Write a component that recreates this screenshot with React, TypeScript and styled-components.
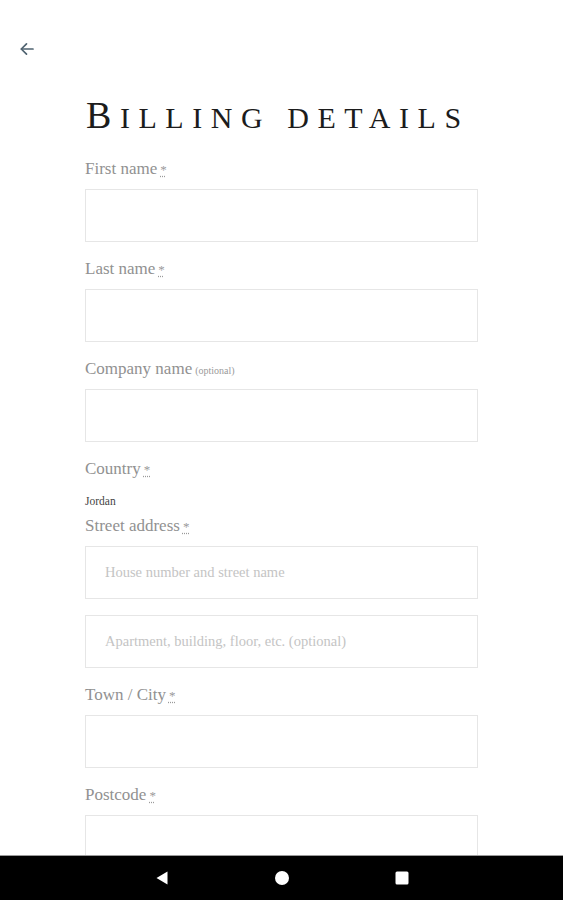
import { createGlobalStyle } from 'styled-components';
import styled from 'styled-components';

const Global = createGlobalStyle`
  html, body {
    margin: 0;
    padding: 0;
    background: #ffffff;
    overflow: hidden;
    height: 100%;
  }
  body {
    font-family: "Liberation Serif", "DejaVu Serif", serif;
  }
`;

const Page = styled.div`
  position: relative;
  width: 563px;
  height: 900px;
  overflow: hidden;
  background: #fff;
`;

const TopBar = styled.div`
  height: 96px;
  padding: 40px 0 0 18px;
  box-sizing: border-box;
`;

const BackBtn = styled.button`
  border: none;
  background: none;
  padding: 0;
  width: 18px;
  height: 18px;
  display: flex;
  align-items: center;
  justify-content: center;
  color: #4f6370;
`;

const Form = styled.form`
  width: 393px;
  margin-left: 85px;
`;

const Title = styled.h1`
  margin: 0 0 23px 1px;
  font-weight: 400;
  color: #1c1c1c;
  font-size: 30px;
  line-height: 38px;
  letter-spacing: 0.285em;
  white-space: nowrap;
  height: 38px;
`;

const Initial = styled.span`
  font-size: 38px;
`;

const Rest = styled.span`
  text-transform: uppercase;
`;

const Field = styled.div<{ $tight?: boolean }>`
  margin-bottom: ${(p) => (p.$tight ? '5px' : '15px')};
`;

const Label = styled.label`
  display: block;
  height: 24px;
  font-size: 17px;
  line-height: 24px;
  color: #919191;
  margin-bottom: 8px;
  white-space: nowrap;
`;

const Req = styled.abbr`
  text-decoration: underline dotted;
  text-underline-offset: 2px;
  font-size: 13px;
  line-height: 1;
  color: #9a9a9a;
  margin-left: 3px;
`;

const Optional = styled.span`
  font-size: 10px;
  line-height: 1;
  color: #9a9a9a;
  margin-left: 3px;
`;

const CountryValue = styled.div`
  margin-top: -8px;
  font-size: 11.5px;
  line-height: 16px;
  padding-top: 12px;
  color: #444;
`;

const Input = styled.input<{ $gap?: boolean }>`
  display: block;
  width: 100%;
  height: 53px;
  box-sizing: border-box;
  border: 1px solid #e6e6e6;
  background: #fff;
  padding: 0 19px;
  font-family: "Liberation Serif", "DejaVu Serif", serif;
  font-size: 14.5px;
  color: #333;
  outline: none;
  margin-top: ${(p) => (p.$gap ? '16px' : '0')};
  &::placeholder {
    color: #c4c4c4;
  }
`;

const NavBar = styled.div`
  position: absolute;
  left: 0;
  right: 0;
  bottom: 0;
  height: 44px;
  background: #000;
  border-top: 1px solid #9a9a9a;
  display: flex;
  align-items: center;
  justify-content: center;
`;

const NavSlot = styled.div`
  width: 120px;
  display: flex;
  justify-content: center;
  align-items: center;
`;

const fields: { label: string; req?: boolean; opt?: boolean }[] = [
  { label: 'First name', req: true },
  { label: 'Last name', req: true },
  { label: 'Company name', opt: true },
];

export default function App() {
  return (
    <Page>
      <Global />
      <TopBar>
        <BackBtn aria-label="Back">
          <svg width="16" height="16" viewBox="0 0 16 16" fill="none" stroke="currentColor" strokeWidth="1.7" strokeLinecap="round" strokeLinejoin="round">
            <path d="M14 8H2.5" />
            <path d="M7.5 2.8L2.3 8l5.2 5.2" />
          </svg>
        </BackBtn>
      </TopBar>
      <Form onSubmit={(e) => e.preventDefault()}>
        <Title>
          <Initial>B</Initial>
          <Rest>illing details</Rest>
        </Title>
        {fields.map((f) => (
          <Field key={f.label}>
            <Label>
              {f.label}
              {f.req && <Req title="required">*</Req>}
              {f.opt && <Optional>(optional)</Optional>}
            </Label>
            <Input type="text" />
          </Field>
        ))}
        <Field $tight>
          <Label>
            Country<Req title="required">*</Req>
          </Label>
          <CountryValue>Jordan</CountryValue>
        </Field>
        <Field>
          <Label>
            Street address<Req title="required">*</Req>
          </Label>
          <Input type="text" placeholder="House number and street name" />
          <Input $gap type="text" placeholder="Apartment, building, floor, etc. (optional)" />
        </Field>
        <Field>
          <Label>
            Town / City<Req title="required">*</Req>
          </Label>
          <Input type="text" />
        </Field>
        <Field>
          <Label>
            Postcode<Req title="required">*</Req>
          </Label>
          <Input type="text" />
        </Field>
      </Form>
      <NavBar>
        <NavSlot>
          <svg width="16" height="16" viewBox="0 0 16 16">
            <path d="M13.5 1.5v13L2.5 8z" fill="#fff" />
          </svg>
        </NavSlot>
        <NavSlot>
          <svg width="16" height="16" viewBox="0 0 16 16">
            <circle cx="8" cy="8" r="7" fill="#fff" />
          </svg>
        </NavSlot>
        <NavSlot>
          <svg width="16" height="16" viewBox="0 0 16 16">
            <rect x="1.5" y="1.5" width="13" height="13" rx="1.5" fill="#fff" />
          </svg>
        </NavSlot>
      </NavBar>
    </Page>
  );
}
